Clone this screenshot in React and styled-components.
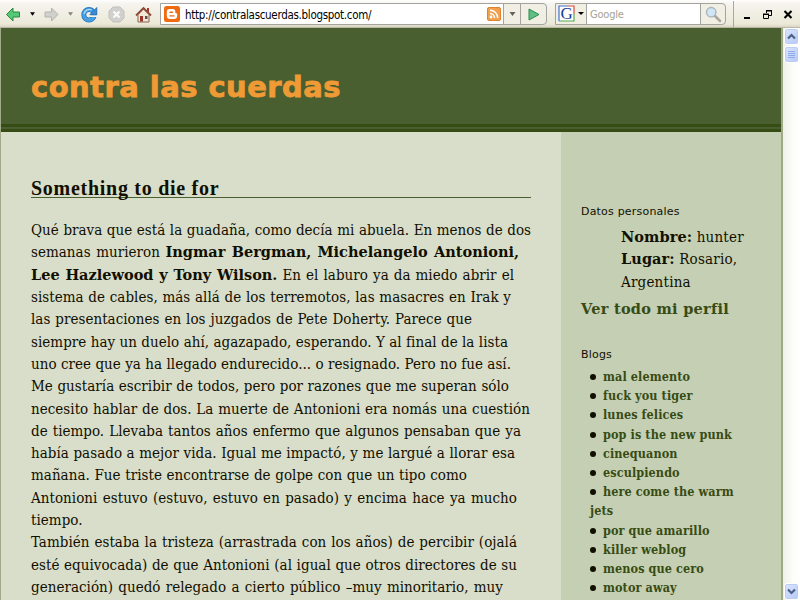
import styled, { createGlobalStyle } from "styled-components";

const SERIF = `"DejaVu Serif Condensed", "DejaVu Serif", serif`;
const WIDE_SERIF = `"DejaVu Serif", serif`;

const GlobalStyle = createGlobalStyle`
  * {
    box-sizing: border-box;
  }

  body {
    margin: 0;
    overflow: hidden;
    background: #d9deca;
    color: #110f00;
  }
`;

const Window = styled.div`
  display: flex;
  flex-direction: column;
  width: 800px;
  height: 600px;
  overflow: hidden;
`;

/* toolbar */
const Toolbar = styled.div`
  display: flex;
  align-items: center;
  flex: none;
  height: 28px;
  background: linear-gradient(#fefefd 0, #f5f4ee 4px, #ece9d8 24px, #d9d5c3 27px, #9b9a86 28px);

  svg {
    display: block;
    flex: none;
  }
`;

const Tools = styled.div`
  display: flex;
  align-items: center;
  width: 160px;
  height: 28px;
  padding-left: 5px;
`;

const Tool = styled.div`
  width: ${(props) => props.$w}px;
`;

const Field = styled.div`
  display: flex;
  align-items: center;
  width: ${(props) => props.$w}px;
  height: 22px;
  margin-left: ${(props) => props.$left || 0}px;
  border: 1px solid #a3a4a0;
  border-radius: 0 4px 4px 0;
  background: #f1efe4;
  overflow: hidden;
`;

const Input = styled.div`
  display: flex;
  align-items: center;
  width: ${(props) => props.$w}px;
  height: 20px;
  padding: 0 2px 0 3px;
  border-right: 1px solid #a3a4a0;
  background: #fff;
`;

const Url = styled.span`
  flex: 1;
  padding: 1px 0 0 5px;
  font: 11.5px "DejaVu Sans Condensed", "DejaVu Sans", sans-serif;
  letter-spacing: -0.3px;
  white-space: nowrap;
  color: #000;
`;

const Hint = styled(Url)`
  padding-left: 0;
  font-size: 11px;
  letter-spacing: -0.2px;
  color: #a5a294;
`;

const Button = styled.div`
  display: flex;
  align-items: center;
  justify-content: center;
  width: ${(props) => props.$w}px;
  height: 20px;
  border-right: ${(props) => (props.$last ? 0 : 1)}px solid #a3a4a0;
`;

const WindowButtons = styled.div`
  display: flex;
  align-items: center;
  height: 27px;
  margin-left: 7px;
  padding-left: 9px;
  border-left: 1px solid #aca899;
`;

/* page */
const View = styled.div`
  display: flex;
  flex: 1;
  min-height: 0;
`;

const Page = styled.div`
  display: flex;
  flex-direction: column;
  width: 783px;
  border-left: 1px solid #a3aa8c;
  border-right: 2px solid #a0a888;
`;

const Header = styled.header`
  flex: none;
  height: 104px;
  padding: 40px 0 0 30px;
  background: linear-gradient(
    #495f2f 96px,
    #374c14 96px 99px,
    #495f2f 99px 101px,
    #374c14 101px
  );
`;

const BlogTitle = styled.h1`
  margin: 0;
  font: bold 29px/38px "DejaVu Sans", Verdana, sans-serif;
  letter-spacing: 0.45px;
  color: #f09a36;
  white-space: nowrap;
  -webkit-text-stroke: 0.8px #f09a36;
`;

const Columns = styled.div`
  display: flex;
  flex: 1;
  min-height: 0;
  overflow: hidden;
`;

const Main = styled.main`
  width: 560px;
  padding: 44px 0 0 30px;
  background: #d9deca;
`;

const PostTitle = styled.h2`
  width: 500px;
  height: 22px;
  margin: 0 0 21px;
  border-bottom: 1px solid #495f2f;
  font: bold 20px/25px "Liberation Serif", serif;
  letter-spacing: 0.72px;
`;

const Line = styled.div`
  width: ${(props) => props.$w}px;
  height: 22.32px;
  font: 15px/22.32px ${SERIF};
  letter-spacing: 0.03px;
  word-spacing: -1.8px;
  white-space: nowrap;
  text-align: justify;
  text-align-last: justify;

  b {
    font: bold 14.5px/22px ${WIDE_SERIF};
    letter-spacing: 0;
  }
`;

const Side = styled.aside`
  width: 220px;
  padding: 72px 0 0 20px;
  background: #c5cfb3;
`;

const SideTitle = styled.h3`
  margin: 0;
  font: 11px/16px "DejaVu Sans", Verdana, sans-serif;
  letter-spacing: 0.2px;
`;

const Profile = styled.div`
  padding: 6px 0 0 40px;
  height: 73px;
  font: 15px/22.4px ${SERIF};
  letter-spacing: 0.2px;

  b {
    font: bold 14.5px/22px ${WIDE_SERIF};
    letter-spacing: 0.08px;
  }
`;

const ProfileLink = styled.a`
  display: block;
  margin: 5px 0 27px;
  font: bold 14.5px/22px ${WIDE_SERIF};
  letter-spacing: 0.27px;
  color: #374c14;
`;

const Blogs = styled.ul`
  margin: 4px 0 0;
  padding: 0 0 0 9px;
  list-style: none;
  font: bold 12.5px/19.2px ${SERIF};
  letter-spacing: 0.1px;
  color: #374c14;
`;

const Blog = styled.li`
  width: 160px;

  &::before {
    content: "";
    display: inline-block;
    width: 6px;
    height: 6px;
    margin-right: 7px;
    border-radius: 50%;
    background: #110f00;
    vertical-align: 1px;
  }
`;

/* scrollbar */
const Scrollbar = styled.div`
  display: flex;
  flex-direction: column;
  align-items: center;
  width: 17px;
  background: linear-gradient(90deg, #f0efe8, #fdfdfa 60%, #fff);
`;

const ScrollButton = styled.div`
  display: flex;
  align-items: center;
  justify-content: center;
  width: 15px;
  height: 17px;
  margin-top: ${(props) => (props.$bottom ? "auto" : "0")};
  margin-bottom: ${(props) => (props.$bottom ? 0 : 1)}px;
  border: 1px solid #fff;
  border-radius: 3px;
  background: linear-gradient(135deg, #dce6fe, #b5c9f8);
  box-shadow: inset 0 0 0 1px #bccdf5;
`;

const post = [
  [500, "Qué brava que está la guadaña, como decía mi abuela. En menos de dos"],
  [488, <>semanas murieron <b>Ingmar Bergman, Michelangelo Antonioni,</b></>],
  [483, <><b>Lee Hazlewood y Tony Wilson.</b> En el laburo ya da miedo abrir el</>],
  [480, "sistema de cables, más allá de los terremotos, las masacres en Irak y"],
  [441, "las presentaciones en los juzgados de Pete Doherty. Parece que"],
  [477, "siempre hay un duelo ahí, agazapado, esperando. Y al final de la lista"],
  [480, "uno cree que ya ha llegado endurecido... o resignado. Pero no fue así."],
  [478, "Me gustaría escribir de todos, pero por razones que me superan sólo"],
  [499, "necesito hablar de dos. La muerte de Antonioni era nomás una cuestión"],
  [490, "de tiempo. Llevaba tantos años enfermo que algunos pensaban que ya"],
  [484, "había pasado a mejor vida. Igual me impactó, y me largué a llorar esa"],
  [436, "mañana. Fue triste encontrarse de golpe con que un tipo como"],
  [486, "Antonioni estuvo (estuvo, estuvo en pasado) y encima hace ya mucho"],
  [54, "tiempo."],
  [486, "También estaba la tristeza (arrastrada con los años) de percibir (ojalá"],
  [486, "esté equivocada) de que Antonioni (al igual que otros directores de su"],
  [472, "generación) quedó relegado a cierto público –muy minoritario, muy"],
];

const blogs = [
  "mal elemento",
  "fuck you tiger",
  "lunes felices",
  "pop is the new punk",
  "cinequanon",
  "esculpiendo",
  "here come the warm jets",
  "por que amarillo",
  "killer weblog",
  "menos que cero",
  "motor away",
];

const Arrow = ({ flip, fill, stroke }) => (
  <svg width="17" height="17" viewBox="0 0 17 17">
    <path
      d="M1.5 8.5 8 2v4h6.5v5H8v4z"
      transform={flip ? "matrix(-1 0 0 1 16.5 0)" : undefined}
      fill={fill}
      stroke={stroke}
      strokeLinejoin="round"
    />
  </svg>
);

const Caret = ({ color = "#000", size = 5 }) => (
  <svg width={size} height="4" viewBox="0 0 6 4">
    <path d="M0 0h6L3 4z" fill={color} />
  </svg>
);

const Chevron = ({ down }) => (
  <svg width="9" height="7" viewBox="0 0 9 7">
    <path
      d={down ? "M1 1.5 4.5 5 8 1.5" : "M1 5.5 4.5 2 8 5.5"}
      fill="none"
      stroke="#4d6185"
      strokeWidth="2.2"
    />
  </svg>
);

const App = () => {
  return (
    <Window>
      <GlobalStyle />
      <Toolbar>
        <Tools>
          <Tool $w={25}>
            <Arrow fill="#55c878" stroke="#2b8a3c" />
          </Tool>
          <Tool $w={13}>
            <Caret />
          </Tool>
          <Tool $w={25}>
            <Arrow flip fill="#d0d0cc" stroke="#b3b3ae" />
          </Tool>
          <Tool $w={13}>
            <Caret color="#85837b" />
          </Tool>
          <Tool $w={27}>
            <svg width="17" height="17" viewBox="0 0 17 17">
              <circle cx="8" cy="8.8" r="5.2" fill="none" stroke="#2a74bd" strokeWidth="5" />
              <circle cx="8" cy="8.8" r="5.2" fill="none" stroke="#46a0e2" strokeWidth="3.4" />
              <path d="M3 8A5.5 5.5 0 0 1 10.5 3.8" fill="none" stroke="#a5daf8" strokeWidth="1.4" />
              <path d="M9.5 9.2H17v1.8H9.5z" fill="#f3f1e8" />
              <path d="M15.8 1.5v7.2H8.8z" fill="#3b8fd6" stroke="#2467ad" strokeWidth=".8" />
            </svg>
          </Tool>
          <Tool $w={27}>
            <svg width="17" height="17" viewBox="0 0 17 17">
              <path
                d="M5 1h7l4 4v7l-4 4H5l-4-4V5z"
                fill="#d0d0cd"
                stroke="#c0c0bc"
                strokeLinejoin="round"
              />
              <path d="m5.5 5.5 6 6m0-6-6 6" stroke="#fafaf8" strokeWidth="2.2" />
            </svg>
          </Tool>
          <svg width="17" height="17" viewBox="0 0 17 17">
            <path d="M12 2h2v4h-2z" fill="#a33c2a" />
            <path d="M3 8.5 8.5 3 14 8.5V16H3z" fill="#f3e7d8" stroke="#87634e" />
            <path d="M1 9.5 8.5 2 16 9.5" fill="none" stroke="#8f4a38" strokeWidth="1.8" />
            <path d="M5 10h3v5.5H5z" fill="#9d3226" />
            <path d="M10 10h2.5v3H10z" fill="#5b514e" />
          </svg>
        </Tools>

        <Field $w={387}>
          <Input $w={343}>
            <svg width="16" height="16" viewBox="0 0 16 16">
              <rect width="16" height="16" rx="2.5" fill="#f06a12" />
              <path
                d="M6 3h2.5A2.8 2.8 0 0 1 11.3 6c0 1 .3 1.2 1 1.2s.9.3.9.9V10A3.2 3.2 0 0 1 10 13H6a3.2 3.2 0 0 1-3.2-3V6A3 3 0 0 1 6 3z"
                fill="#fff"
              />
              <path d="M6 6.2h2.5M6 9.9h4" stroke="#f06a12" strokeWidth="1.4" strokeLinecap="round" />
            </svg>
            <Url>http://contralascuerdas.blogspot.com/</Url>
            <svg width="14" height="14" viewBox="0 0 14 14">
              <rect x=".5" y=".5" width="13" height="13" rx="1.5" fill="#f2a04e" stroke="#dc8430" />
              <circle cx="4" cy="10" r="1.4" fill="#fff" />
              <path
                d="M3 6.5A4.5 4.5 0 0 1 7.5 11M3 3.3A7.7 7.7 0 0 1 10.7 11"
                fill="none"
                stroke="#fff"
                strokeWidth="1.5"
              />
            </svg>
          </Input>
          <Button $w={17}>
            <Caret color="#63625c" size={7} />
          </Button>
          <Button $w={25} $last>
            <svg width="12" height="13" viewBox="0 0 12 13">
              <path d="M1 1 11 6.5 1 12z" fill="#5fbf83" stroke="#2d8b50" strokeLinejoin="round" />
            </svg>
          </Button>
        </Field>

        <Field $w={171} $left={8}>
          <Button $w={31}>
            <svg width="26" height="18" viewBox="0 0 26 18">
              <path d="M1 1h15v15H1z" fill="#fff" />
              <path d="M1 16V1h8" fill="none" stroke="#3f71d2" strokeWidth="1.2" />
              <path d="M9 1h7v8" fill="none" stroke="#d34a3a" strokeWidth="1.2" />
              <path d="M16 9v7H1" fill="none" stroke="#54a852" strokeWidth="1.2" />
              <text x="2.5" y="14.2" fontFamily="Liberation Serif" fontSize="17" fill="#153e9a">
                G
              </text>
              <path d="M20 7h6l-3 3z" fill="#000" />
            </svg>
          </Button>
          <Input $w={114}>
            <Hint>Google</Hint>
          </Input>
          <Button $w={24} $last>
            <svg width="17" height="17" viewBox="0 0 17 17">
              <path d="m9.5 9.5 5.5 5.5" stroke="#aaa6a0" strokeWidth="2.6" strokeLinecap="round" />
              <circle cx="6.2" cy="6.2" r="4.7" fill="#cfe6f6" stroke="#a9b3ba" strokeWidth="1.4" />
            </svg>
          </Button>
        </Field>

        <WindowButtons>
          <svg width="52" height="12" viewBox="0 0 52 12">
            <path d="M1 9h6v2H1z" fill="#000" />
            <path d="M23.5 5V2.5h5v5H26M20.5 6.5h5v4h-5z" fill="none" stroke="#000" />
            <path d="M23 2h6v1.5h-6zM20 5.5h6V7h-6z" fill="#000" />
            <path d="m41.5 3 7 7m0-7-7 7" stroke="#000" strokeWidth="2.1" />
          </svg>
        </WindowButtons>
      </Toolbar>

      <View>
        <Page>
          <Header>
            <BlogTitle>contra las cuerdas</BlogTitle>
          </Header>
          <Columns>
            <Main>
              <PostTitle>Something to die for</PostTitle>
              {post.map(([width, text], i) => (
                <Line key={i} $w={width}>
                  {text}
                </Line>
              ))}
            </Main>
            <Side>
              <SideTitle>Datos personales</SideTitle>
              <Profile>
                <b>Nombre:</b> hunter
                <br />
                <b>Lugar:</b> Rosario,
                <br />
                Argentina
              </Profile>
              <ProfileLink>Ver todo mi perfil</ProfileLink>
              <SideTitle>Blogs</SideTitle>
              <Blogs>
                {blogs.map((name) => (
                  <Blog key={name}>{name}</Blog>
                ))}
              </Blogs>
            </Side>
          </Columns>
        </Page>
        <Scrollbar>
          <ScrollButton>
            <Chevron />
          </ScrollButton>
          <ScrollButton>
            <svg width="7" height="8" viewBox="0 0 7 8">
              <path d="M0 .5h7M0 2.5h7M0 4.5h7M0 6.5h7" stroke="#8fa9e6" />
            </svg>
          </ScrollButton>
          <ScrollButton $bottom>
            <Chevron down />
          </ScrollButton>
        </Scrollbar>
      </View>
    </Window>
  );
};

export default App;
